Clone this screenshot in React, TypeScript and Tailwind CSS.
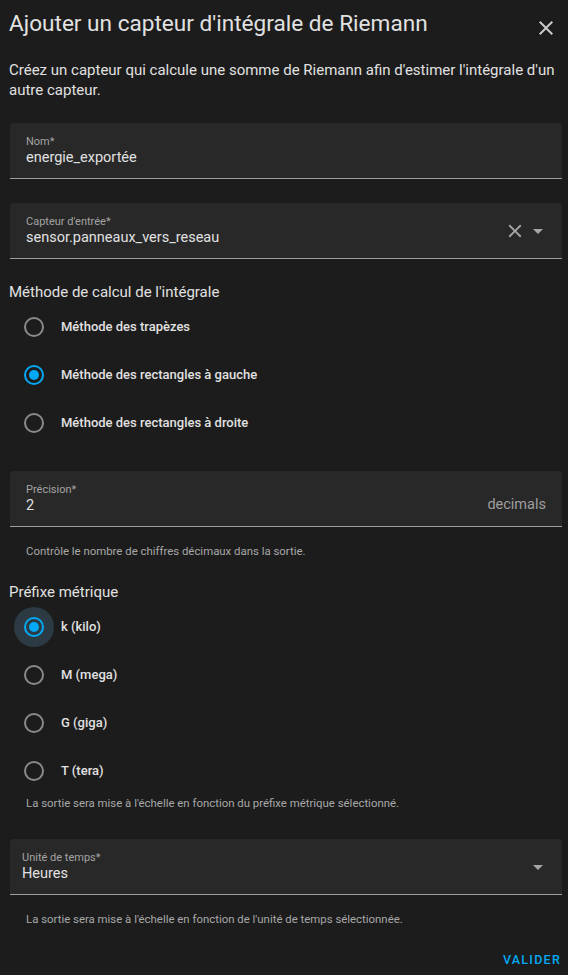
import React from 'react';

const font = { fontFamily: 'Roboto, "Noto Sans", sans-serif' };

function CloseIcon({ size = 24, className = '' }: { size?: number; className?: string }) {
  return (
    <svg width={size} height={size} viewBox="0 0 24 24" className={className} fill="currentColor">
      <path d="M19,6.41L17.59,5L12,10.59L6.41,5L5,6.41L10.59,12L5,17.59L6.41,19L12,13.41L17.59,19L19,17.59L13.41,12L19,6.41Z" />
    </svg>
  );
}

function MenuDown() {
  return (
    <svg width={24} height={24} viewBox="0 0 24 24" fill="currentColor">
      <path d="M7,10L12,15L17,10H7Z" />
    </svg>
  );
}

function Field({
  label,
  value,
  suffix,
  clearable,
  select,
  tight,
}: {
  label: string;
  value: string;
  suffix?: string;
  clearable?: boolean;
  select?: boolean;
  tight?: boolean;
}) {
  return (
    <div className="ml-[10px] mr-[6px] h-[56px] rounded-t-[4px] border-b border-[#9e9e9e] bg-[#282828] flex items-center pr-[12px]">
      <div className={`flex-1 min-w-0 self-start pt-[12px] ${tight ? 'pl-[12px]' : 'pl-[16px]'}`}>
        <div className="text-[11px] leading-[13px] text-[#a3a3a3]">{label}</div>
        <div className="text-[14.5px] leading-[20px] text-[#e1e1e1]">{value}</div>
      </div>
      {suffix && <div className="pt-[12px] pr-[4px] text-[14.5px] text-[#9e9e9e]">{suffix}</div>}
      {clearable && <CloseIcon size={22} className="text-[#a6a6a6]" />}
      {select && (
        <div className="text-[#a6a6a6]">
          <MenuDown />
        </div>
      )}
    </div>
  );
}

function Radio({ label, checked, focused }: { label: string; checked?: boolean; focused?: boolean }) {
  return (
    <div className="h-[48px] flex items-center pl-[14px]">
      <div
        className={`w-10 h-10 rounded-full flex items-center justify-center ${focused ? 'bg-[#2b3a43]' : ''}`}
      >
        <div
          className={`w-5 h-5 rounded-full border-2 flex items-center justify-center ${
            checked ? 'border-[#03a9f4]' : 'border-[#8a8a8a]'
          }`}
        >
          {checked && <div className="w-[10px] h-[10px] rounded-full bg-[#03a9f4]" />}
        </div>
      </div>
      <span className="ml-[7px] text-[13px] font-medium text-[#e1e1e1]">{label}</span>
    </div>
  );
}

function Helper({ children }: { children: React.ReactNode }) {
  return <p className="px-[26px] text-[11.4px] leading-[16px] text-[#a8a8a8]">{children}</p>;
}

export default function App() {
  return (
    <div className="min-h-[975px] w-full bg-[#1c1c1c] text-[#e1e1e1]" style={font}>
      {/* Header */}
      <div className="flex items-start justify-between pt-[10px] pl-[9px] pr-[10px]">
        <h2 className="text-[22.6px] leading-[28px] font-normal text-[#e1e1e1]">
          Ajouter un capteur d'intégrale de Riemann
        </h2>
        <CloseIcon className="mt-[6px] text-[#c8c8c8]" />
      </div>

      <p className="mt-[20px] px-[9px] text-[15px] leading-[20px] text-[#e1e1e1]">
        Créez un capteur qui calcule une somme de Riemann afin d'estimer l'intégrale d'un autre capteur.
      </p>

      <div className="mt-[23px]">
        <Field label="Nom*" value="energie_exportée" />
      </div>
      <div className="mt-[24px]">
        <Field label="Capteur d'entrée*" value="sensor.panneaux_vers_reseau" clearable select />
      </div>

      <h3 className="mt-[21px] px-[9px] text-[15px] leading-[24px] font-normal">
        Méthode de calcul de l'intégrale
      </h3>
      <div className="-mt-[1px]">
        <Radio label="Méthode des trapèzes" />
        <Radio label="Méthode des rectangles à gauche" checked />
        <Radio label="Méthode des rectangles à droite" />
      </div>

      <div className="mt-[24px]">
        <Field label="Précision*" value="2" suffix="decimals" />
      </div>
      <div className="mt-[16px]">
        <Helper>Contrôle le nombre de chiffres décimaux dans la sortie.</Helper>
      </div>

      <h3 className="mt-[21px] px-[9px] text-[15px] leading-[24px] font-normal">Préfixe métrique</h3>
      <div className="-mt-[1px]">
        <Radio label="k (kilo)" checked focused />
        <Radio label="M (mega)" />
        <Radio label="G (giga)" />
        <Radio label="T (tera)" />
      </div>
      <Helper>La sortie sera mise à l'échelle en fonction du préfixe métrique sélectionné.</Helper>

      <div className="mt-[28px]">
        <Field label="Unité de temps*" value="Heures" select tight />
      </div>
      <div className="mt-[16px]">
        <Helper>La sortie sera mise à l'échelle en fonction de l'unité de temps sélectionnée.</Helper>
      </div>

      <div className="mt-[15px] flex justify-end pr-[7px]">
        <button className="h-9 text-[12.5px] font-medium uppercase tracking-[1.25px] text-[#03a9f4]">
          Valider
        </button>
      </div>
    </div>
  );
}
